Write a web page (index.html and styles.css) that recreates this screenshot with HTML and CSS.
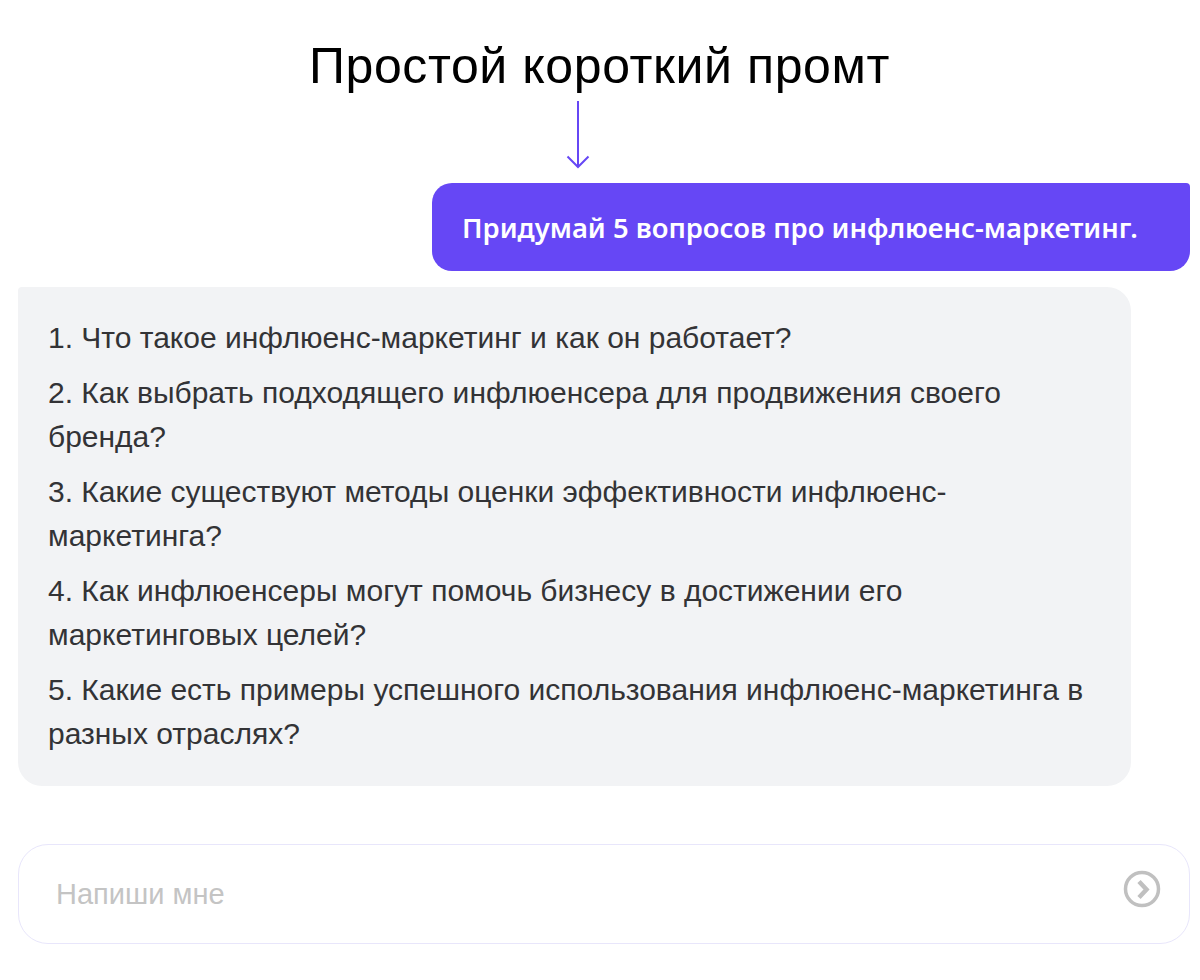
FILE: index.html
```html
<!DOCTYPE html>
<html lang="ru">

<head>
    <meta charset="UTF-8">
    <title>Простой короткий промт</title>
    <link rel="stylesheet" href="styles.css">
</head>

<body>

    <h1 class="title">Простой короткий промт</h1>

    <div class="arrow">
        <svg width="24" height="68" viewBox="0 0 24 68" fill="none" stroke="#6647f5" stroke-width="2">
            <path d="M12 0V66"/>
            <path d="M1.500 55.500L12 66L22.500 55.500"/>
        </svg>
    </div>

    <div class="chat">
        <div class="question">Придумай 5 вопросов про инфлюенс-маркетинг.</div>

        <div class="answer">
            <p>1. Что такое инфлюенс-маркетинг и как он работает?</p>
            <p>2. Как выбрать подходящего инфлюенсера для продвижения своего бренда?</p>
            <p>3. Какие существуют методы оценки эффективности инфлюенс-маркетинга?</p>
            <p>4. Как инфлюенсеры могут помочь бизнесу в достижении его маркетинговых целей?</p>
            <p>5. Какие есть примеры успешного использования инфлюенс-маркетинга в разных отраслях?</p>
        </div>

        <div class="input">
            <span class="placeholder">Напиши мне</span>
            <svg class="send" width="38" height="38" viewBox="0 0 38 38" fill="none" stroke="#c0c0c0">
                <circle cx="19" cy="19" r="16.500" stroke-width="3.500"/>
                <path d="M16 11.500L23.500 19.500L16 27.500" stroke-width="4.500"/>
            </svg>
        </div>
    </div>

</body>

</html>
```

FILE: styles.css
```css
html, body {
    margin: 0;
    padding: 0;
    background-color: #fff;
}

body {
    font-family: "Liberation Sans", Arial, sans-serif;
    color: #333336;
}

.title {
    margin: 0;
    padding-top: 36px;
    padding-left: 309px;
    font-size: 50px;
    line-height: 60px;
    font-weight: 400;
    letter-spacing: 0.600px;
    color: #000;
}

.arrow {
    height: 68px;
    padding-left: 566px;
    margin-top: 5px;
}

.arrow svg {
    display: block;
}

.chat {
    display: flex;
    flex-direction: column;
    margin: 14px 10px 0 18px;
}

/* Purple message */
.question {
    align-self: flex-end;
    box-sizing: border-box;
    width: 758px;
    height: 88px;
    padding-left: 30px;
    display: flex;
    align-items: center;
    background-color: #6647f5;
    color: #fff;
    font-family: "Noto Sans", sans-serif;
    font-size: 27.400px;
    font-weight: 600;
    border-radius: 20px 4px 20px 20px;
}

/* Grey answer */
.answer {
    box-sizing: border-box;
    width: 1113px;
    height: 499px;
    margin-top: 16px;
    padding: 29px 30px 0;
    background-color: #f2f3f5;
    border-radius: 4px 24px 24px 24px;
    font-size: 30px;
    line-height: 44px;
}

.answer p {
    margin: 0 0 11px;
}

/* Input */
.input {
    box-sizing: border-box;
    height: 100px;
    margin-top: 58px;
    padding: 0 28px 0 37px;
    display: flex;
    align-items: center;
    justify-content: space-between;
    border: 1px solid #e8e6fb;
    border-radius: 30px;
}

.placeholder {
    font-size: 29px;
    color: #c4c4c4;
}

.send {
    margin-bottom: 10px;
}
```
